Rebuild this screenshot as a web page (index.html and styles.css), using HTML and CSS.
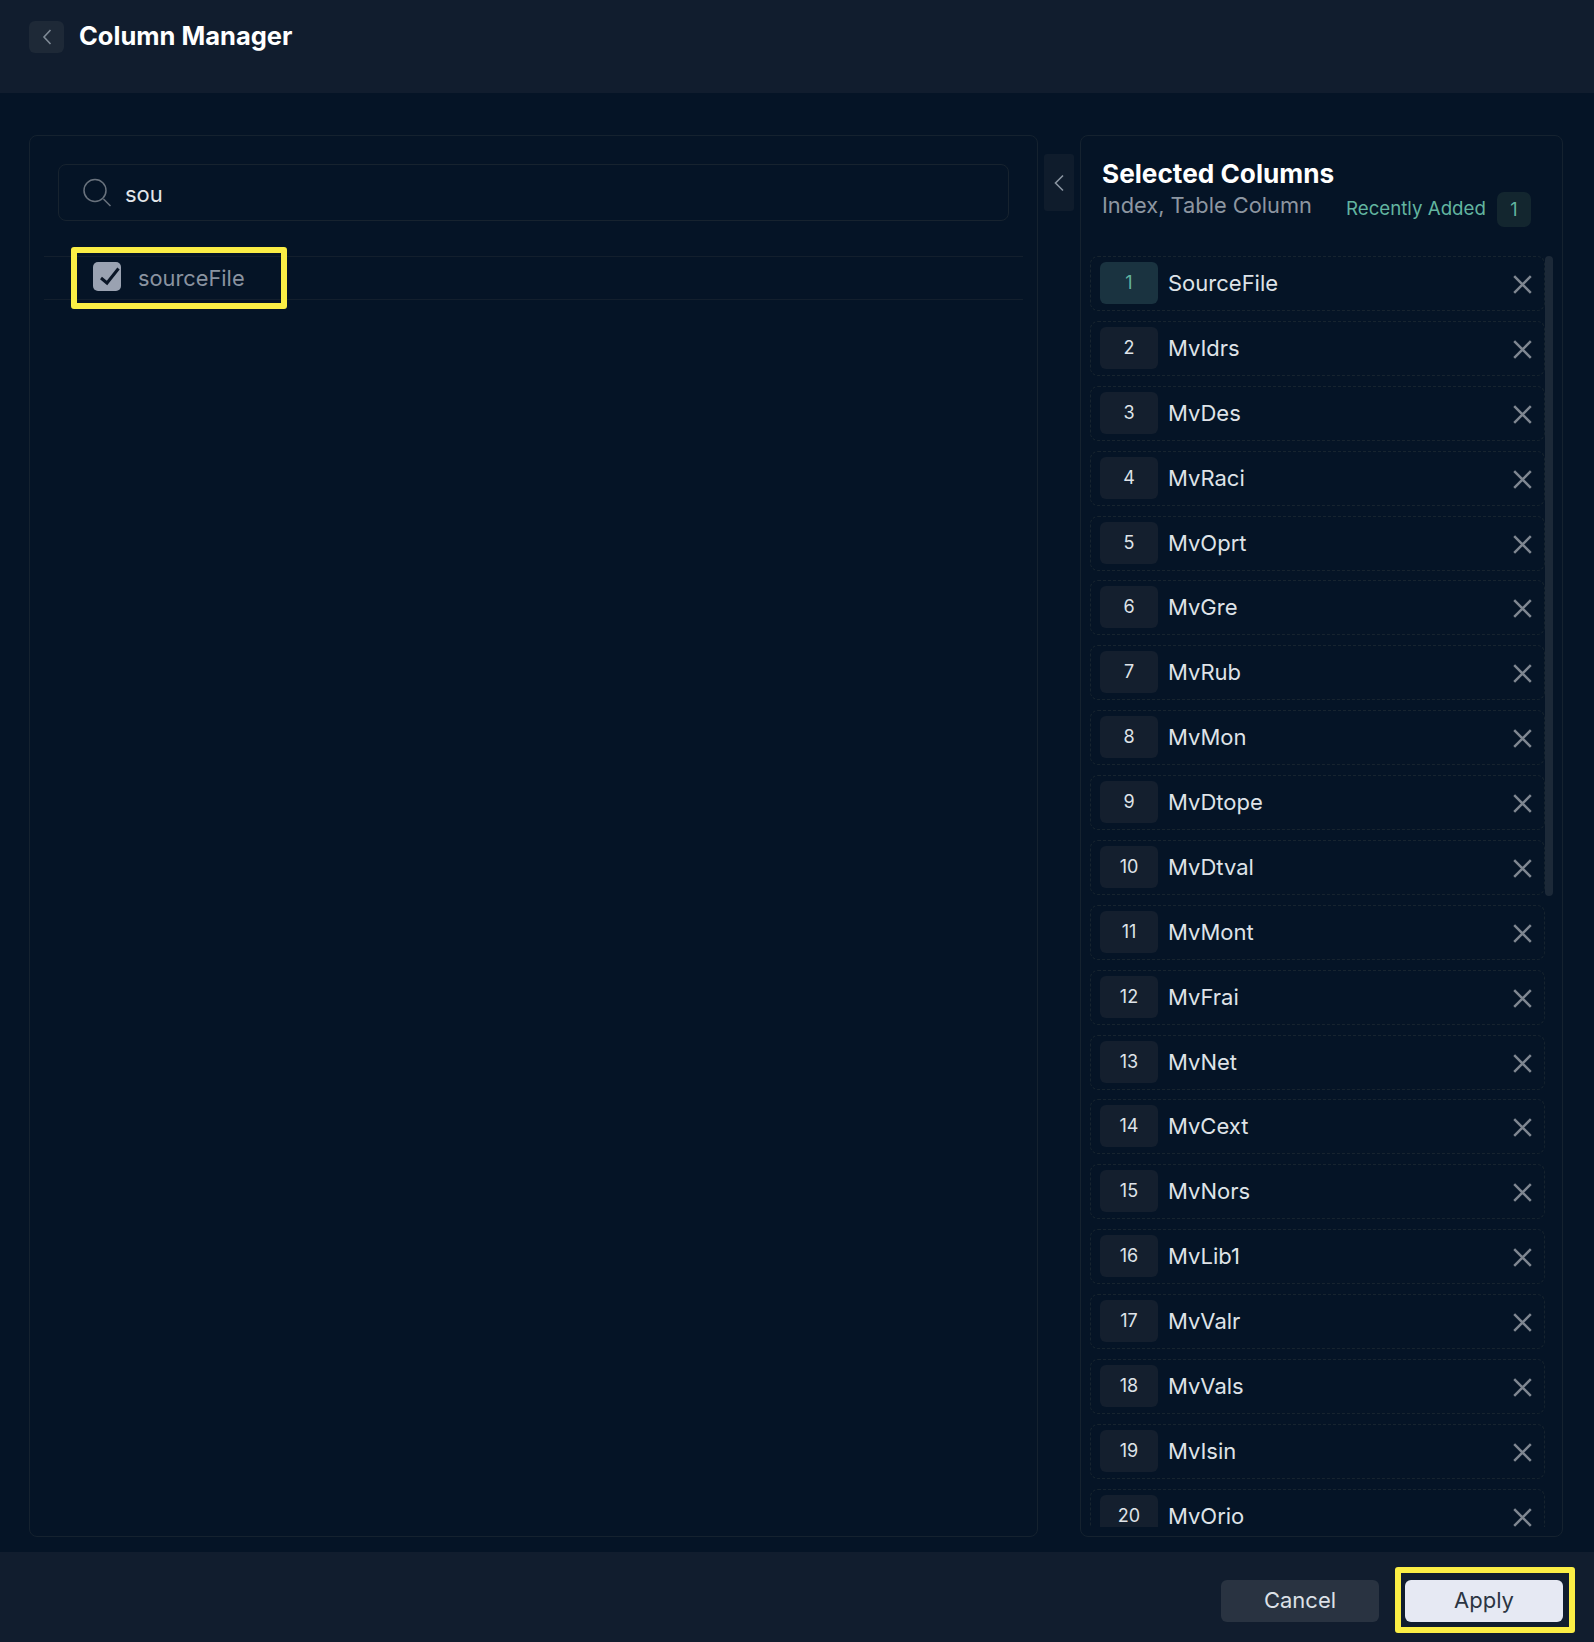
FILE: index.html
```html
<!DOCTYPE html>
<html lang="en">
<head>
<meta charset="utf-8">
<title>Column Manager</title>
<link rel="stylesheet" href="styles.css">
</head>
<body>
<div class="app">
  <header class="topbar">
    <button class="back"><svg width="12" height="18" viewBox="0 0 12 18"><path d="M9.500 2 3 9l6.500 7" fill="none" stroke="#7f8a96" stroke-width="1.600"/></svg></button>
    <h1>Column Manager</h1>
  </header>
  <main class="content">
    <section class="panel left">
      <div class="search">
        <svg width="30" height="30" viewBox="0 0 30 30"><circle cx="13" cy="12.500" r="11" fill="none" stroke="#69727d" stroke-width="1.500"/><path d="m21.500 21 7 7" stroke="#69727d" stroke-width="1.500" fill="none"/></svg>
        <span class="query">sou</span>
      </div>
      <div class="result">
        <span class="check"><svg width="28" height="29" viewBox="0 0 28 29"><path d="M8 16 14 21 25.500 6.500" fill="none" stroke="#0b1626" stroke-width="3"/></svg></span>
        <span class="result-name">sourceFile</span>
      </div>
    </section>
    <button class="collapse"><svg width="12" height="18" viewBox="0 0 12 18"><path d="M10 1.500 2.500 9l7.500 7.500" fill="none" stroke="#8a95a1" stroke-width="1.600"/></svg></button>
    <section class="panel right">
      <div class="head">
        <h2>Selected Columns</h2>
        <div class="sub">
          <span class="desc">Index, Table Column</span>
          <span class="recent">Recently Added</span>
          <span class="recent-count">1</span>
        </div>
      </div>
      <div class="list">
        <div class="rows">
          <div class="row"><span class="num active">1</span><span class="name">SourceFile</span><svg class="x" viewBox="0 0 16 16"><path d="M1 1l14 14M15 1 1 15"/></svg></div>
          <div class="row"><span class="num">2</span><span class="name">MvIdrs</span><svg class="x" viewBox="0 0 16 16"><path d="M1 1l14 14M15 1 1 15"/></svg></div>
          <div class="row"><span class="num">3</span><span class="name">MvDes</span><svg class="x" viewBox="0 0 16 16"><path d="M1 1l14 14M15 1 1 15"/></svg></div>
          <div class="row"><span class="num">4</span><span class="name">MvRaci</span><svg class="x" viewBox="0 0 16 16"><path d="M1 1l14 14M15 1 1 15"/></svg></div>
          <div class="row"><span class="num">5</span><span class="name">MvOprt</span><svg class="x" viewBox="0 0 16 16"><path d="M1 1l14 14M15 1 1 15"/></svg></div>
          <div class="row"><span class="num">6</span><span class="name">MvGre</span><svg class="x" viewBox="0 0 16 16"><path d="M1 1l14 14M15 1 1 15"/></svg></div>
          <div class="row"><span class="num">7</span><span class="name">MvRub</span><svg class="x" viewBox="0 0 16 16"><path d="M1 1l14 14M15 1 1 15"/></svg></div>
          <div class="row"><span class="num">8</span><span class="name">MvMon</span><svg class="x" viewBox="0 0 16 16"><path d="M1 1l14 14M15 1 1 15"/></svg></div>
          <div class="row"><span class="num">9</span><span class="name">MvDtope</span><svg class="x" viewBox="0 0 16 16"><path d="M1 1l14 14M15 1 1 15"/></svg></div>
          <div class="row"><span class="num">10</span><span class="name">MvDtval</span><svg class="x" viewBox="0 0 16 16"><path d="M1 1l14 14M15 1 1 15"/></svg></div>
          <div class="row"><span class="num">11</span><span class="name">MvMont</span><svg class="x" viewBox="0 0 16 16"><path d="M1 1l14 14M15 1 1 15"/></svg></div>
          <div class="row"><span class="num">12</span><span class="name">MvFrai</span><svg class="x" viewBox="0 0 16 16"><path d="M1 1l14 14M15 1 1 15"/></svg></div>
          <div class="row"><span class="num">13</span><span class="name">MvNet</span><svg class="x" viewBox="0 0 16 16"><path d="M1 1l14 14M15 1 1 15"/></svg></div>
          <div class="row"><span class="num">14</span><span class="name">MvCext</span><svg class="x" viewBox="0 0 16 16"><path d="M1 1l14 14M15 1 1 15"/></svg></div>
          <div class="row"><span class="num">15</span><span class="name">MvNors</span><svg class="x" viewBox="0 0 16 16"><path d="M1 1l14 14M15 1 1 15"/></svg></div>
          <div class="row"><span class="num">16</span><span class="name">MvLib1</span><svg class="x" viewBox="0 0 16 16"><path d="M1 1l14 14M15 1 1 15"/></svg></div>
          <div class="row"><span class="num">17</span><span class="name">MvValr</span><svg class="x" viewBox="0 0 16 16"><path d="M1 1l14 14M15 1 1 15"/></svg></div>
          <div class="row"><span class="num">18</span><span class="name">MvVals</span><svg class="x" viewBox="0 0 16 16"><path d="M1 1l14 14M15 1 1 15"/></svg></div>
          <div class="row"><span class="num">19</span><span class="name">MvIsin</span><svg class="x" viewBox="0 0 16 16"><path d="M1 1l14 14M15 1 1 15"/></svg></div>
          <div class="row"><span class="num">20</span><span class="name">MvOrio</span><svg class="x" viewBox="0 0 16 16"><path d="M1 1l14 14M15 1 1 15"/></svg></div>
        </div>
        <div class="scrollbar"></div>
      </div>
    </section>
  </main>
  <footer class="footer">
    <button class="btn cancel">Cancel</button>
    <button class="btn apply">Apply</button>
  </footer>
</div>
</body>
</html>
```
FILE: styles.css
```css
*, *::after { box-sizing: border-box; }
html, body { margin: 0; padding: 0; }
body {
  width: 1594px;
  height: 1642px;
  background: #051426;
  font-family: "Inter", "Noto Sans", sans-serif;
  color: #e6e9ee;
  overflow: hidden;
}
.app { display: flex; flex-direction: column; height: 1642px; }
button { font-family: inherit; border: 0; padding: 0; }

.topbar {
  height: 93px;
  background: #111d2e;
  display: flex;
  align-items: flex-start;
  gap: 15px;
  padding: 21px 0 0 29px;
}
.back {
  width: 35px;
  height: 32px;
  border-radius: 6px;
  background: #1e2937;
  display: flex;
  align-items: center;
  justify-content: center;
}
h1 {
  margin: 0;
  font-size: 25.5px;
  line-height: 30px;
  font-weight: 700;
  color: #fff;
}

.content {
  flex: 1;
  display: flex;
  align-items: stretch;
  padding: 42px 31px 15px 29px;
  min-height: 0;
}
.panel {
  border: 1px solid #15222f;
  border-radius: 8px;
}
.left {
  width: 1009px;
  flex: none;
  padding: 28px 14px 0 14px;
}
.search {
  margin: 0 14px;
  height: 57px;
  border: 1px solid #17232f;
  border-radius: 8px;
  display: flex;
  align-items: center;
  gap: 13px;
  padding: 0 0 0 23px;
  font-size: 22px;
  color: #e2e6ea;
}
.query { margin-top: 3px; }
.result {
  position: relative;
  margin-top: 35px;
  height: 44px;
  border-top: 1px solid #131f2d;
  border-bottom: 1px solid #131f2d;
  display: flex;
  align-items: center;
  gap: 17px;
  padding-left: 49px;
}
.result::after {
  content: "";
  position: absolute;
  left: 27px;
  top: -10px;
  width: 216px;
  height: 62px;
  border: 6px solid #fbee45;
  border-radius: 3px;
}
.check {
  width: 28px;
  height: 29px;
  margin-top: -3px;
  border-radius: 5px;
  background: #9aa2b1;
  display: flex;
}
.result-name { font-size: 21.8px; margin-top: -1px; color: #8a93a0; }

.collapse {
  margin: 19px 6px 0 6px;
  width: 30px;
  height: 57px;
  background: #0f1c2c;
  border-radius: 3px;
  display: flex;
  align-items: center;
  justify-content: center;
  flex: none;
}
.right {
  width: 483px;
  flex: none;
  padding: 0 9px 5px 9px;
  display: flex;
  flex-direction: column;
  min-height: 0;
}
.head { padding: 21px 0 0 12px; height: 120px; flex: none; }
h2 {
  margin: 0;
  font-size: 26.2px;
  line-height: 34px;
  font-weight: 700;
  color: #fff;
}
.sub { display: flex; align-items: flex-start; height: 36px; }
.desc { font-size: 21.8px; line-height: 26px; margin-top: 1px; color: #8d96a1; width: 244px; white-space: nowrap; }
.recent { font-size: 18.7px; line-height: 32px; margin-top: 2px; color: #62b5a0; width: 151px; white-space: nowrap; }
.recent-count {
  width: 34px;
  height: 35px;
  margin-top: 1px;
  border-radius: 7px;
  background: #13262f;
  color: #62b5a0;
  font-size: 18px;
  display: flex;
  align-items: center;
  justify-content: center;
}
.list { position: relative; flex: 1; overflow: hidden; min-height: 0; clip-path: inset(0 0 4px 0); }
.rows { display: flex; flex-direction: column; gap: 9.88px; padding-right: 8px; }
.row {
  height: 55px;
  flex: none;
  border: 1px dashed #17242f;
  border-radius: 8px;
  display: flex;
  align-items: center;
  padding: 0 12px 0 9px;
}
.num {
  width: 58px;
  height: 42px;
  flex: none;
  border-radius: 6px;
  background: #141f2e;
  color: #dfe3e8;
  font-size: 18px;
  display: flex;
  align-items: center;
  justify-content: center;
  padding-bottom: 1px;
  margin-top: -1px;
}
.num.active { background: #1a3340; color: #62b5a0; }
.name { flex: 1; margin-left: 10px; font-size: 22px; line-height: 20px; margin-top: -1px; color: #dfe3e8; }
.x { width: 19px; height: 19px; flex: none; margin-top: 2px; }
.x path { fill: none; stroke: #7f8791; stroke-width: 2.1; }
.scrollbar {
  position: absolute;
  right: 0;
  top: 0;
  width: 8px;
  height: 640px;
  border-radius: 4px;
  background: #1c2938;
}

.footer {
  height: 90px;
  background: #111d2e;
  display: flex;
  justify-content: flex-end;
  gap: 26px;
  padding: 28px 31px 0 0;
}
.btn {
  width: 158px;
  height: 42px;
  border-radius: 6px;
  font-size: 22px;
  padding-bottom: 2px;
}
.cancel { background: #293341; color: #dde1e7; }
.apply { position: relative; background: #e6e9f3; color: #2c3542; }
.apply::after {
  content: "";
  position: absolute;
  left: -10px;
  top: -13px;
  width: 180px;
  height: 66px;
  border: 6px solid #fbee45;
  border-radius: 3px;
}
```
